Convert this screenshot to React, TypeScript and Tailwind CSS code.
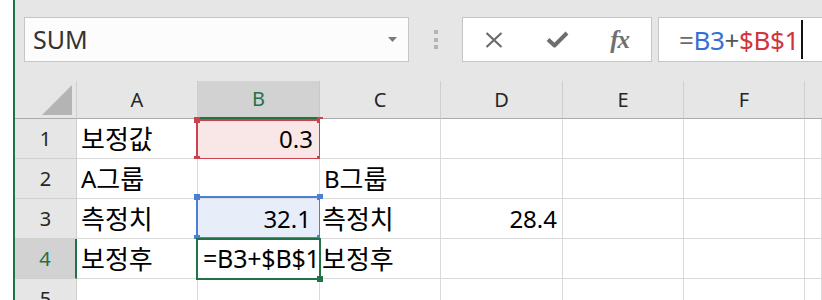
import React from "react";

type CellProps = {
  children?: React.ReactNode;
  className?: string;
  bg?: string;
};

function Cell({ children, className = "", bg = "bg-white" }: CellProps) {
  return (
    <div
      className={
        "relative border-r border-b border-[#dadada] flex items-center text-[24px] leading-none text-black whitespace-nowrap " +
        bg +
        " " +
        className
      }
    >
      {children}
    </div>
  );
}

function K({ children }: { children: React.ReactNode }) {
  return <span className="text-[26px] leading-none">{children}</span>;
}

function ColHead({ label, active = false }: { label: string; active?: boolean }) {
  return active ? (
    <div className="border-r border-[#c8c8c8] border-b-2 border-b-[#217346] bg-[#d2d2d2] flex items-center justify-center text-[20px] text-[#217346]">
      {label}
    </div>
  ) : (
    <div className="border-r border-[#cfcfcf] border-b border-b-[#ababab] bg-[#e6e6e6] flex items-center justify-center text-[20px] text-[#262626]">
      {label}
    </div>
  );
}

function RowHead({ label, active = false }: { label: string; active?: boolean }) {
  return active ? (
    <div className="border-r-2 border-[#217346] border-b border-b-[#d0d0d0] bg-[#d2d2d2] flex items-center justify-center text-[20px] text-[#217346]">
      {label}
    </div>
  ) : (
    <div className="border-r border-[#cfcfcf] border-b border-b-[#d0d0d0] bg-[#e6e6e6] flex items-center justify-center text-[20px] text-[#262626]">
      {label}
    </div>
  );
}

export default function App() {
  return (
    <div className="w-[822px] h-[300px] overflow-hidden flex bg-white font-['Noto_Sans','Noto_Sans_CJK_KR',sans-serif]">
      <div className="w-[13px] shrink-0 bg-white" />
      <div className="w-[2px] shrink-0 bg-[#217346]" />
      <div className="flex-1 min-w-0 flex flex-col bg-[#e6e6e6]">
        {/* Toolbar */}
        <div className="h-[81px] shrink-0 flex items-start pt-[17px] pl-[9px]">
          {/* Name box */}
          <div className="w-[385px] h-[45px] shrink-0 border border-[#c6c6c6] bg-[#fcfcfc] flex items-center justify-between pl-[8px] pr-[11px]">
            <span className="text-[25px] leading-none text-[#333]">SUM</span>
            <svg width="9" height="5" viewBox="0 0 9 5">
              <polygon points="0,0 9,0 4.5,5" fill="#7a7a7a" />
            </svg>
          </div>
          {/* Separator dots */}
          <div className="w-[53px] h-[45px] shrink-0 flex flex-col items-center justify-center gap-[3.5px]">
            <div className="w-[4px] h-[4px] bg-[#b4b4b4]" />
            <div className="w-[4px] h-[4px] bg-[#b4b4b4]" />
            <div className="w-[4px] h-[4px] bg-[#b4b4b4]" />
          </div>
          {/* fx box */}
          <div className="w-[190px] h-[45px] shrink-0 border border-[#c6c6c6] bg-white flex items-center">
            <div className="w-[63px] flex justify-center">
              <svg width="18" height="16" viewBox="0 0 18 16">
                <path d="M1.5 1 L16.5 15 M16.5 1 L1.5 15" stroke="#6b6b6b" strokeWidth="2.2" fill="none" />
              </svg>
            </div>
            <div className="w-[63px] flex justify-center">
              <svg width="23" height="17" viewBox="0 0 23 17">
                <path d="M2 8.5 L8.5 14.5 L21 2" stroke="#6e6e6e" strokeWidth="4" fill="none" strokeLinejoin="round" />
              </svg>
            </div>
            <div className="w-[63px] flex justify-center">
              <span className="font-['Liberation_Serif',serif] italic font-bold text-[25px] leading-none text-[#707070] tracking-[-1px]">
                fx
              </span>
            </div>
          </div>
          {/* Formula box */}
          <div className="ml-[6px] flex-1 h-[45px] border border-[#c6c6c6] border-r-0 bg-white flex items-center pl-[20px]">
            <span className="text-[26px] leading-none whitespace-nowrap tracking-[-0.4px]">
              <span className="text-[#6a6a6a]">=</span>
              <span className="text-[#3270d6]">B3</span>
              <span className="text-[#555]">+</span>
              <span className="text-[#d1343c]">$B$1</span>
            </span>
            <div className="ml-[2px] w-[2px] h-[39px] bg-[#111]" />
          </div>
        </div>

        {/* Grid */}
        <div className="flex-1 min-h-0 overflow-hidden">
          <div className="grid grid-cols-[62px_121px_122px_121px_122px_121px_121px_1fr] grid-rows-[38px_40px_40px_40px_40px_40px]">
            {/* header row */}
            <div className="relative border-r border-[#cfcfcf] border-b border-b-[#ababab] bg-[#e6e6e6]">
              <svg className="absolute inset-0" width="61" height="37" viewBox="0 0 61 37">
                <polygon points="57,4 57,34 27,34" fill="#b4b4b4" />
              </svg>
            </div>
            <ColHead label="A" />
            <ColHead label="B" active />
            <ColHead label="C" />
            <ColHead label="D" />
            <ColHead label="E" />
            <ColHead label="F" />
            <div className="border-b border-b-[#ababab] bg-[#e6e6e6]" />

            {/* row 1 */}
            <RowHead label="1" />
            <Cell className="pl-[4px]"><K>보정값</K></Cell>
            <Cell className="justify-end pr-[6px]" bg="bg-[#f9e7e8]">
              0.3
              <div className="absolute left-[-2px] top-0 w-[125px] h-[41px] border-2 border-[#c9424e] pointer-events-none">
                <div className="absolute -left-[4px] -top-[4px] w-[6px] h-[6px] bg-[#c9424e]" />
                <div className="absolute -right-[4px] -top-[4px] w-[6px] h-[6px] bg-[#c9424e]" />
                <div className="absolute -left-[4px] -bottom-[4px] w-[6px] h-[6px] bg-[#c9424e]" />
                <div className="absolute -right-[4px] -bottom-[4px] w-[6px] h-[6px] bg-[#c9424e]" />
              </div>
            </Cell>
            <Cell />
            <Cell />
            <Cell />
            <Cell />
            <Cell />

            {/* row 2 */}
            <RowHead label="2" />
            <Cell className="pl-[4px]">A<K>그룹</K></Cell>
            <Cell />
            <Cell className="pl-[4px]">B<K>그룹</K></Cell>
            <Cell />
            <Cell />
            <Cell />
            <Cell />

            {/* row 3 */}
            <RowHead label="3" />
            <Cell className="pl-[4px]"><K>측정치</K></Cell>
            <Cell className="justify-end pr-[8px]" bg="bg-[#e8eef9]">
              32.1
              <div className="absolute left-[-2px] top-[-3px] w-[125px] h-[43px] border-2 border-[#4a7fd6] pointer-events-none">
                <div className="absolute -left-[4px] -top-[4px] w-[6px] h-[6px] bg-[#4a7fd6]" />
                <div className="absolute -right-[4px] -top-[4px] w-[6px] h-[6px] bg-[#4a7fd6]" />
                <div className="absolute -left-[4px] -bottom-[4px] w-[6px] h-[6px] bg-[#4a7fd6]" />
                <div className="absolute -right-[4px] -bottom-[4px] w-[6px] h-[6px] bg-[#4a7fd6]" />
              </div>
            </Cell>
            <Cell className="pl-[2px]"><K>측정치</K></Cell>
            <Cell className="justify-end pr-[5px]">28.4</Cell>
            <Cell />
            <Cell />
            <Cell />

            {/* row 4 */}
            <RowHead label="4" active />
            <Cell className="pl-[4px]"><K>보정후</K></Cell>
            <Cell className="pl-[5px]">
              <span className="relative z-10 text-[25px] tracking-[-0.2px]">=B3+$B$1</span>
              <div className="absolute left-[-2px] top-[-1px] w-[125px] h-[42px] border-2 border-[#217346] pointer-events-none z-10">
                <div className="absolute -right-[4px] -bottom-[4px] w-[6px] h-[6px] bg-[#217346]" />
              </div>
            </Cell>
            <Cell className="pl-[2px]"><K>보정후</K></Cell>
            <Cell />
            <Cell />
            <Cell />
            <Cell />

            {/* row 5 */}
            <RowHead label="5" />
            <Cell />
            <Cell />
            <Cell />
            <Cell />
            <Cell />
            <Cell />
            <Cell />
          </div>
        </div>
      </div>
    </div>
  );
}
